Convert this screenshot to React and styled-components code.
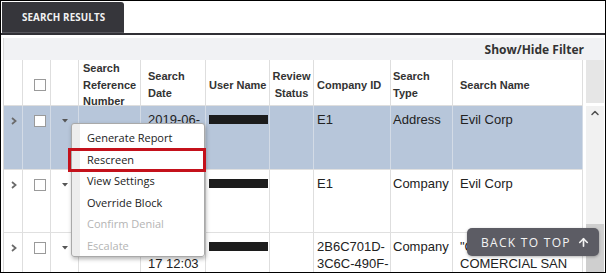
import React from 'react';
import styled, { createGlobalStyle } from 'styled-components';
import { ArrowUp, ChevronUp } from 'lucide-react';

const GlobalStyle = createGlobalStyle`
  html, body { margin: 0; padding: 0; background: #fff; }
  body { font-family: "Liberation Sans", Arial, sans-serif; }
  *, *::before, *::after { box-sizing: border-box; }
`;

const COLS = '19px 28px 28px 62px 65px 64px 44px 77px 62px 130px';

const Frame = styled.div`
  position: relative;
  width: 606px;
  height: 273px;
  border: 1px solid #000;
  overflow: hidden;
  background: #fff;
  display: flex;
  flex-direction: column;
`;

const TabBar = styled.div`
  height: 34px;
  flex: none;
  padding: 1px 0 0 1px;
  border-bottom: 2px solid #303035;
  display: flex;
  align-items: flex-start;
`;

const Tab = styled.div`
  width: 122px;
  height: 31px;
  background: #36363b;
  border-radius: 0 3px 0 0;
  border-bottom: 1px solid #56565c;
  color: #f2f2f2;
  font-family: "Open Sans", sans-serif;
  font-weight: 700;
  font-size: 9.8px;
  letter-spacing: 0.1px;
  padding-left: 20px;
  display: flex;
  align-items: center;
`;

const Panel = styled.div`
  flex: 1;
  margin: 3px 1px 0 2px;
  border-left: 1px solid #d8d8d8;
  display: flex;
  flex-direction: column;
  min-height: 0;
`;

const FilterBar = styled.div`
  height: 22px;
  flex: none;
  background: #f1f2f4;
  display: flex;
  align-items: center;
  justify-content: flex-end;
  padding-right: 20px;
  font-family: "Open Sans", sans-serif;
  font-weight: 700;
  font-size: 12px;
  color: #333;
`;

const Body = styled.div`
  flex: 1;
  display: flex;
  min-height: 0;
`;

const Grid = styled.div`
  width: 579px;
  flex: none;
  display: flex;
  flex-direction: column;
`;

const HeaderRow = styled.div`
  display: grid;
  grid-template-columns: ${COLS};
  height: 46px;
  flex: none;
  border-bottom: 1px solid #dedede;
`;

const HeadCell = styled.div`
  border-right: 1px solid #dedede;
  display: flex;
  align-items: center;
  justify-content: ${p => (p.$center ? 'center' : 'flex-start')};
  text-align: ${p => (p.$center ? 'center' : 'left')};
  padding-left: ${p => p.$pl || 0}px;
  font-weight: 700;
  font-size: 11px;
  line-height: 16.5px;
  color: #333;
`;

const Row = styled.div`
  display: grid;
  grid-template-columns: ${COLS};
  height: ${p => p.$h}px;
  flex: none;
  background: ${p => (p.$selected ? '#b7c6da' : '#fff')};
  border-bottom: 1px solid #e0e0e0;
`;

const Cell = styled.div`
  border-right: 1px solid ${p => (p.$selected ? '#d3dbe6' : '#dedede')};
  padding: 5px 0 0 ${p => p.$pl || 0}px;
  font-size: 13px;
  line-height: 17px;
  color: #222;
  overflow: hidden;
`;

const IconCell = styled.div`
  border-right: 1px solid ${p => (p.$selected ? '#d3dbe6' : '#dedede')};
  padding: ${p => p.$pt}px 0 0 ${p => p.$pl}px;
  display: flex;
  align-items: flex-start;
`;

const Check = styled.span`
  display: block;
  width: 12px;
  height: 12px;
  border: 1px solid #9a9a9a;
  background: #fff;
`;

const Redacted = styled.span`
  display: block;
  width: 59px;
  height: 9px;
  margin-top: 4px;
  background: #1c1c1c;
`;

const ScrollCol = styled.div`
  width: 21px;
  flex: none;
  padding-left: 3px;
  display: flex;
  flex-direction: column;
`;

const ScrollFiller = styled.div`
  height: 43px;
  flex: none;
  background: #e6e6e6;
  margin-bottom: 3px;
`;

const Track = styled.div`
  flex: 1;
  background: #f1f1f1;
  display: flex;
  flex-direction: column;
  align-items: center;
`;

const ArrowBtn = styled.div`
  height: 17px;
  display: flex;
  justify-content: center;
  padding-top: 1px;
  color: #505050;
`;

const Thumb = styled.div`
  width: 100%;
  margin-top: 101px;
  flex: 1;
  background: #cfcfcf;
`;

const Menu = styled.div`
  position: absolute;
  left: 70px;
  top: 122px;
  width: 134px;
  height: 134px;
  padding: 3px 0;
  border: 1px solid #a9a9a9;
  border-radius: 3px;
  background: linear-gradient(to right, #ededed 0, #ededed 8px, #fff 8px);
  box-shadow: 1px 2px 4px rgba(0, 0, 0, 0.3);
  font-family: "Open Sans", sans-serif;
  font-size: 11px;
`;

const MenuItem = styled.div`
  position: relative;
  height: 21.5px;
  line-height: 21.5px;
  padding-left: 15px;
  color: ${p => (p.$disabled ? '#b4b4b4' : '#222')};
  white-space: nowrap;

  ${p =>
    p.$highlighted &&
    `
    &::after {
      content: '';
      position: absolute;
      top: -1px;
      bottom: -2px;
      left: -4px;
      right: -2px;
      border: 3px solid #c4111b;
    }
  `}
`;

const BackToTop = styled.div`
  position: absolute;
  left: 466px;
  top: 227px;
  width: 132px;
  height: 28px;
  border-radius: 5px;
  background: #5c5c64;
  box-shadow: 0 1px 3px rgba(0, 0, 0, 0.3);
  color: #f4f4f4;
  display: flex;
  align-items: center;
  padding-left: 14px;
  gap: 6px;
  font-family: "Open Sans", sans-serif;
  font-size: 12px;
  letter-spacing: 1.3px;
`;

const Expand = () => (
  <svg width="6" height="8" viewBox="0 0 6 8">
    <polyline points="1,1 4.6,4 1,7" fill="none" stroke="#6a6a6a" strokeWidth="1.7" />
  </svg>
);

const Caret = () => (
  <svg width="6" height="4" viewBox="0 0 6 4">
    <polygon points="0,0 6,0 3,3.5" fill="#555" />
  </svg>
);

const rows = [
  {
    h: 64,
    selected: true,
    id: 'E1',
    type: 'Address',
    name: 'Evil Corp',
  },
  {
    h: 63,
    selected: false,
    id: 'E1',
    type: 'Company',
    name: 'Evil Corp',
  },
  {
    h: 60,
    selected: false,
    id: (
      <>
        2B6C701D-<wbr />3C6C-<wbr />490F-<wbr />A1B2-<wbr />7E4D9C
      </>
    ),
    type: 'Company',
    name: '"CENTRO COMERCIAL SAN JUAN"',
  },
];

const menuItems = [
  { label: 'Generate Report' },
  { label: 'Rescreen', highlighted: true },
  { label: 'View Settings' },
  { label: 'Override Block' },
  { label: 'Confirm Denial', disabled: true },
  { label: 'Escalate', disabled: true },
];

export default function App() {
  return (
    <>
      <GlobalStyle />
      <Frame>
        <TabBar>
          <Tab>SEARCH RESULTS</Tab>
        </TabBar>
        <Panel>
          <FilterBar>Show/Hide Filter</FilterBar>
          <Body>
            <Grid>
              <HeaderRow>
                <HeadCell />
                <HeadCell $pl={11}>
                  <Check />
                </HeadCell>
                <HeadCell />
                <HeadCell $pl={4}>Search Reference Number</HeadCell>
                <HeadCell $pl={7}>Search Date</HeadCell>
                <HeadCell $pl={3}>User Name</HeadCell>
                <HeadCell $center>Review Status</HeadCell>
                <HeadCell $pl={3}>Company ID</HeadCell>
                <HeadCell $pl={2}>Search Type</HeadCell>
                <HeadCell $pl={7}>Search Name</HeadCell>
              </HeaderRow>
              {rows.map((r, i) => (
                <Row key={i} $h={r.h} $selected={r.selected}>
                  <IconCell $selected={r.selected} $pt={11} $pl={7}>
                    <Expand />
                  </IconCell>
                  <IconCell $selected={r.selected} $pt={9} $pl={11}>
                    <Check />
                  </IconCell>
                  <IconCell $selected={r.selected} $pt={13} $pl={11}>
                    <Caret />
                  </IconCell>
                  <Cell $selected={r.selected} $pl={4} />
                  <Cell $selected={r.selected} $pl={7}>
                    2019-06-<wbr />17 12:03
                  </Cell>
                  <Cell $selected={r.selected} $pl={3}>
                    <Redacted />
                  </Cell>
                  <Cell $selected={r.selected} />
                  <Cell $selected={r.selected} $pl={3}>
                    {r.id}
                  </Cell>
                  <Cell $selected={r.selected} $pl={2}>
                    {r.type}
                  </Cell>
                  <Cell $selected={r.selected} $pl={7}>
                    {r.name}
                  </Cell>
                </Row>
              ))}
            </Grid>
            <ScrollCol>
              <ScrollFiller />
              <Track>
                <ArrowBtn>
                  <ChevronUp size={12} strokeWidth={3} />
                </ArrowBtn>
                <Thumb />
              </Track>
            </ScrollCol>
          </Body>
        </Panel>
        <Menu>
          {menuItems.map(m => (
            <MenuItem key={m.label} $disabled={m.disabled} $highlighted={m.highlighted}>
              {m.label}
            </MenuItem>
          ))}
        </Menu>
        <BackToTop>
          <span>BACK TO TOP</span>
          <ArrowUp size={13} strokeWidth={3} />
        </BackToTop>
      </Frame>
    </>
  );
}
